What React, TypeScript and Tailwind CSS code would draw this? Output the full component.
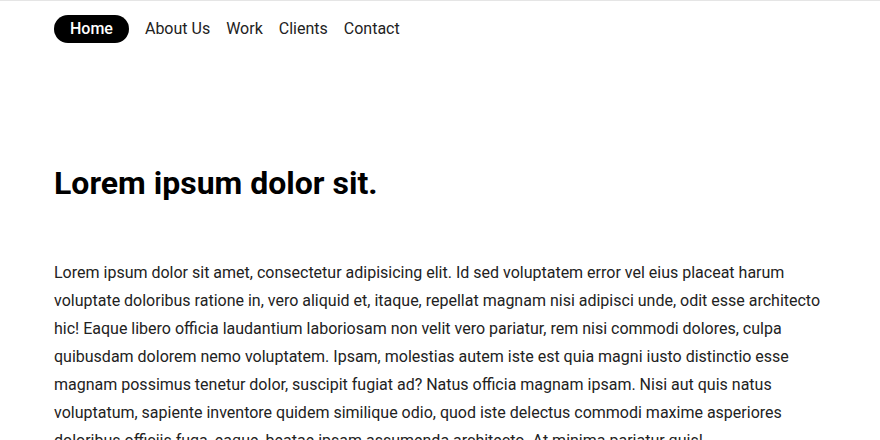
import React from 'react';

const links = ['About Us', 'Work', 'Clients', 'Contact'];

const App: React.FC = () => {
  return (
    <div className="min-h-screen bg-white border-t border-[#e5e5e5] font-['Roboto',sans-serif] text-[#222]">
      <nav className="px-[54px] pt-[14px] flex items-center gap-4">
        <a className="bg-black text-white rounded-full h-[28px] px-4 flex items-center text-[16px] font-medium">Home</a>
        {links.map((l) => (
          <a key={l} className="text-[16px] text-[#222]">{l}</a>
        ))}
      </nav>
      <main className="px-[54px] pr-[56px]">
        <h1 className="mt-[120px] text-[32px] font-bold text-black leading-tight">Lorem ipsum dolor sit.</h1>
        <p className="mt-[56px] text-[16px] leading-[28px] text-[#222]">
          Lorem ipsum dolor sit amet, consectetur adipisicing elit. Id sed voluptatem error vel eius placeat harum
          voluptate doloribus ratione in, vero aliquid et, itaque, repellat magnam nisi adipisci unde, odit esse architecto
          hic! Eaque libero officia laudantium laboriosam non velit vero pariatur, rem nisi commodi dolores, culpa
          quibusdam dolorem nemo voluptatem. Ipsam, molestias autem iste est quia magni iusto distinctio esse
          magnam possimus tenetur dolor, suscipit fugiat ad? Natus officia magnam ipsam. Nisi aut quis natus
          voluptatum, sapiente inventore quidem similique odio, quod iste delectus commodi maxime asperiores
          doloribus officiis fuga, eaque, beatae ipsam assumenda architecto. At minima pariatur quis!
        </p>
      </main>
    </div>
  );
};

export default App;
